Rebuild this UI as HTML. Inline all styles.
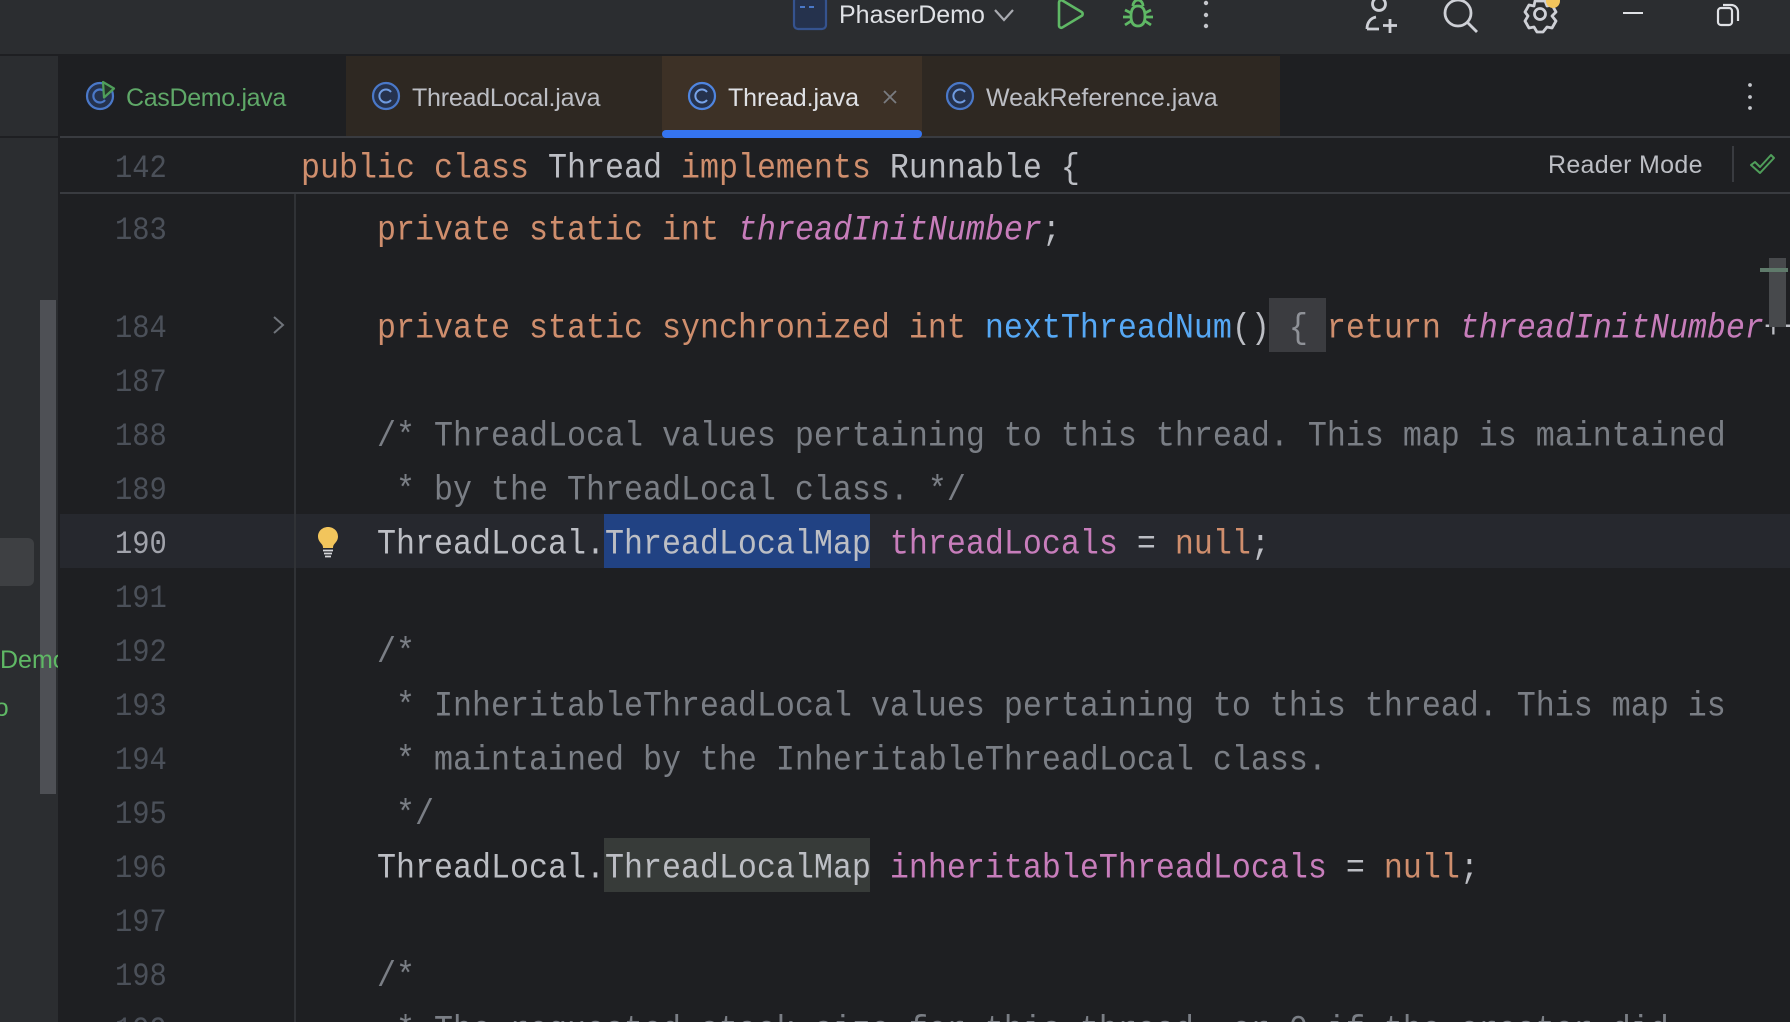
<!DOCTYPE html>
<html><head><meta charset="utf-8"><style>
html,body{margin:0;padding:0;background:#1e1f22}
#r{position:relative;width:1790px;height:1022px;overflow:hidden;background:#1e1f22}
#r div,#r span.a,#r svg{position:absolute}
.u{font-family:"Liberation Sans",sans-serif;font-size:25px;white-space:nowrap;line-height:36px}
.l{left:115px;width:60px;font:28.8px/54px "Liberation Mono",monospace;color:#4b5059;white-space:pre;transform-origin:0 34.7px;transform:translateY(5px) scaleY(1.13)}
.c{left:301px;font:31.67px/54px "Liberation Mono",monospace;color:#bcbec4;white-space:pre;transform-origin:0 35.4px;transform:translateY(4.5px) scaleY(1.1)}
.k{color:#cf8e6d}.f{color:#c77dbb;font-style:italic}.g{color:#7a7e85}.m{color:#56a8f5}
.f2{color:#c77dbb}
</style></head><body><div id="r">
<div style="left:0;top:0;width:1790px;height:54px;background:#2b2d30"></div>
<div style="left:0;top:54px;width:1790px;height:2px;background:#1e1f22"></div>
<div style="left:0;top:56px;width:58px;height:966px;background:#2b2d30"></div>
<div style="left:58px;top:56px;width:2px;height:966px;background:#1e1f22"></div>
<div style="left:0;top:136px;width:60px;height:2px;background:#1e1f22"></div>
<div style="left:40px;top:300px;width:16px;height:494px;background:#4e5055"></div>
<div style="left:0;top:538px;width:34px;height:48px;background:#3e4043;border-radius:0 6px 6px 0"></div>
<div class="u" style="left:0;top:642px;width:58px;overflow:hidden;color:#5fb865;height:36px">Demo</div>
<div style="left:0;top:690px;width:8px;height:36px;overflow:hidden"><div class="u" style="left:-58px;top:0;color:#5fb865">Demo</div></div>

<!-- tabs -->
<div style="left:346px;top:56px;width:316px;height:80px;background:#2e2822"></div>
<div style="left:662px;top:56px;width:260px;height:80px;background:#3d3126"></div>
<div style="left:922px;top:56px;width:358px;height:80px;background:#2e2822"></div>
<div style="left:60px;top:136px;width:1730px;height:2px;background:#393b40"></div>
<div style="left:662px;top:130px;width:260px;height:8px;background:#3574f0;border-radius:4px"></div>

<svg style="left:82px;top:76px" width="40" height="40" viewBox="0 0 40 40" fill="none">
<circle cx="18" cy="20" r="13" fill="#25324d" stroke="#4a78c8" stroke-width="2.2"/>
<path d="M23 16a6.5 6.5 0 1 0 0 8" stroke="#4a78c8" stroke-width="2.2"/>
<path d="M21 6l11 6.500-10 9z" fill="#24352a" stroke="#4f9e5a" stroke-width="2.2" stroke-linejoin="round"/></svg>
<div class="u" style="left:126px;top:80px;color:#5fa868;letter-spacing:-.33px">CasDemo.java</div>
<svg style="left:368px;top:78px" width="36" height="36" viewBox="0 0 36 36" fill="none">
<circle cx="18" cy="18" r="13" fill="#25324d" stroke="#4a78c8" stroke-width="2.2"/>
<path d="M23 14a6.5 6.5 0 1 0 0 8" stroke="#6f9be0" stroke-width="2"/></svg>
<div class="u" style="left:412px;top:80px;color:#bcbec4;letter-spacing:-.22px">ThreadLocal.java</div>
<svg style="left:684px;top:78px" width="36" height="36" viewBox="0 0 36 36" fill="none">
<circle cx="18" cy="18" r="13" fill="#25324d" stroke="#4f85e0" stroke-width="2.2"/>
<path d="M23 14a6.5 6.5 0 1 0 0 8" stroke="#78a4ea" stroke-width="2"/></svg>
<div class="u" style="left:728px;top:80px;color:#dfe1e5;letter-spacing:-.1px">Thread.java</div>
<svg style="left:882px;top:89px" width="16" height="16" viewBox="0 0 16 16"><path d="M2 2l12 12M14 2L2 14" stroke="#7a7c80" stroke-width="1.8"/></svg>
<svg style="left:942px;top:78px" width="36" height="36" viewBox="0 0 36 36" fill="none">
<circle cx="18" cy="18" r="13" fill="#25324d" stroke="#4a78c8" stroke-width="2.2"/>
<path d="M23 14a6.5 6.5 0 1 0 0 8" stroke="#6f9be0" stroke-width="2"/></svg>
<div class="u" style="left:986px;top:80px;color:#bcbec4">WeakReference.java</div>
<svg style="left:1744px;top:80px" width="12" height="34" viewBox="0 0 12 34" fill="#c4c6cb"><circle cx="6" cy="5" r="1.900"/><circle cx="6" cy="17" r="1.900"/><circle cx="6" cy="28" r="1.900"/></svg>

<!-- toolbar -->
<svg style="left:790px;top:-4px" width="40" height="36" viewBox="0 0 40 36" fill="none">
<rect x="4" y="1" width="32" height="32" rx="4" fill="#25324d" stroke="#35538f" stroke-width="2.2"/>
<path d="M10 11h5M19 11h5" stroke="#4a78c8" stroke-width="2"/></svg>
<div class="u" style="left:839px;top:-3px;color:#dfe1e5">PhaserDemo</div>
<svg style="left:992px;top:6px" width="24" height="18" viewBox="0 0 24 18" fill="none"><path d="M3 4l9 10 9-10" stroke="#a8aab0" stroke-width="2.2"/></svg>
<svg style="left:1053px;top:-3px" width="34" height="34" viewBox="0 0 34 34" fill="none"><path d="M6 5.5C6 3.6 8 2.6 9.6 3.6l19 11.4c1.4.9 1.4 3 0 3.9l-19 11.4C8 31.400 6 30.300 6 28.500z" stroke="#5fb865" stroke-width="2.600"/></svg>
<svg style="left:1120px;top:-3px" width="36" height="34" viewBox="0 0 36 34" fill="none" stroke="#5fb865" stroke-width="2.800">
<path d="M18 9c5 0 7 4 7 10s-2 10-7 10-7-4-7-10 2-10 7-10z"/>
<path d="M13 9c0-3 2-6 5-6s5 3 5 6M5 13l6 3M31 13l-6 3M5 28l6-4M31 28l-6-4M3 20h8M33 20h-8"/></svg>
<svg style="left:1200px;top:-2px" width="12" height="34" viewBox="0 0 12 34" fill="#c4c6cb"><circle cx="6" cy="5" r="2.200"/><circle cx="6" cy="17" r="2.200"/><circle cx="6" cy="28" r="2.200"/></svg>
<svg style="left:1362px;top:-4px" width="42" height="40" viewBox="0 0 42 40" fill="none" stroke="#ced0d6" stroke-width="2.800">
<circle cx="17" cy="8" r="6.500"/><path d="M5 33c0-7 4-11 9-12M5 33h12M28 23v14M21 29.500h14"/></svg>
<svg style="left:1440px;top:-4px" width="42" height="40" viewBox="0 0 42 40" fill="none" stroke="#ced0d6" stroke-width="2.800">
<circle cx="18" cy="17" r="13"/><path d="M27 26l10 10"/></svg>
<svg style="left:1521px;top:-4px" width="42" height="40" viewBox="0 0 42 40" fill="none" stroke="#ced0d6" stroke-width="2.800">
<circle cx="19" cy="18" r="5.500"/><path d="M14 5h10l2 5 5-1 4 7-4 4 4 5-4 7-5-1-4 5h-6l-3-5-5 1-4-7 3-5-3-4 4-7 5 1z" stroke-linejoin="round"/></svg>
<div style="left:1546px;top:-4px;width:14px;height:12px;border-radius:0 0 7px 7px;background:#f2c55c"></div>
<div style="left:1623px;top:12px;width:20px;height:2px;background:#dfe1e5"></div>
<svg style="left:1714px;top:2px" width="28" height="26" viewBox="0 0 28 26" fill="none" stroke="#dfe1e5" stroke-width="2.200">
<rect x="4" y="6" width="14" height="17" rx="3"/><path d="M9 3h8c4 0 7 3 7 7v9"/></svg>

<!-- editor -->
<div style="left:60px;top:514px;width:1730px;height:54px;background:#26282e"></div>
<div style="left:60px;top:192px;width:1730px;height:2px;background:#393b40"></div>
<div style="left:294px;top:194px;width:2px;height:828px;background:#303236"></div>
<div style="left:1269px;top:298px;width:57px;height:54px;background:#3b3c40"></div>
<div style="left:604px;top:514px;width:266px;height:54px;background:#214283"></div>
<div style="left:604px;top:838px;width:266px;height:54px;background:#373b39"></div>

<div class="l" style="top:138px">142</div>
<div class="c" style="top:138px"><span class="k">public class </span>Thread <span class="k">implements </span>Runnable {</div>
<div class="l" style="top:200px">183</div>
<div class="c" style="top:200px">    <span class="k">private static int </span><span class="f">threadInitNumber</span>;</div>
<div class="l" style="top:298px">184</div>
<svg style="left:270px;top:312px" width="18" height="26" viewBox="0 0 18 26" fill="none"><path d="M4 5l9 8-9 8" stroke="#6f737a" stroke-width="2"/></svg>
<div class="c" style="top:298px">    <span class="k">private static synchronized int </span><span class="m">nextThreadNum</span>() <span style="color:#8f9298">{</span> <span class="k">return </span><span class="f">threadInitNumber</span>++</div>
<div class="l" style="top:352px">187</div>
<div class="l" style="top:406px">188</div>
<div class="c g" style="top:406px">    /* ThreadLocal values pertaining to this thread. This map is maintained</div>
<div class="l" style="top:460px">189</div>
<div class="c g" style="top:460px">     * by the ThreadLocal class. */</div>
<div class="l" style="top:514px;color:#a1a3ab">190</div>
<svg style="left:316px;top:526px" width="24" height="32" viewBox="0 0 24 32"><path d="M12 1C6 1 2 5.500 2 10.500c0 4 2.500 6 4 8 1 1.500 1 2.500 1 3.500h10c0-1 0-2 1-3.500 1.500-2 4-4 4-8C22 5.500 18 1 12 1z" fill="#f2c55c"/><path d="M7 24.500h10M8 27.500h8M9 30.500h6" stroke="#d5d6da" stroke-width="1.800"/></svg>
<div class="c" style="top:514px">    ThreadLocal.ThreadLocalMap <span class="f2">threadLocals</span> = <span class="k">null</span>;</div>
<div class="l" style="top:568px">191</div>
<div class="l" style="top:622px">192</div>
<div class="c g" style="top:622px">    /*</div>
<div class="l" style="top:676px">193</div>
<div class="c g" style="top:676px">     * InheritableThreadLocal values pertaining to this thread. This map is</div>
<div class="l" style="top:730px">194</div>
<div class="c g" style="top:730px">     * maintained by the InheritableThreadLocal class.</div>
<div class="l" style="top:784px">195</div>
<div class="c g" style="top:784px">     */</div>
<div class="l" style="top:838px">196</div>
<div class="c" style="top:838px">    ThreadLocal.ThreadLocalMap <span class="f2">inheritableThreadLocals</span> = <span class="k">null</span>;</div>
<div class="l" style="top:892px">197</div>
<div class="l" style="top:946px">198</div>
<div class="c g" style="top:946px">    /*</div>
<div class="l" style="top:1000px">199</div>
<div class="c g" style="top:1000px">     * The requested stack size for this thread, or 0 if the creator did</div>

<div class="u" style="left:1548px;top:147px;color:#bcbec4;letter-spacing:.3px">Reader Mode</div>
<div style="left:1732px;top:146px;width:2px;height:36px;background:#393b40"></div>
<svg style="left:1748px;top:152px" width="28" height="26" viewBox="0 0 28 26" fill="none"><path d="M3 13l4-3 5 5L23 3l3 3-14 15z" stroke="#4f9e5a" stroke-width="2" stroke-linejoin="round"/></svg>
<div style="left:1769px;top:258px;width:17px;height:69px;background:#47494c"></div>
<div style="left:1760px;top:268px;width:28px;height:4px;background:#5f7a6b"></div>
</div></body></html>
